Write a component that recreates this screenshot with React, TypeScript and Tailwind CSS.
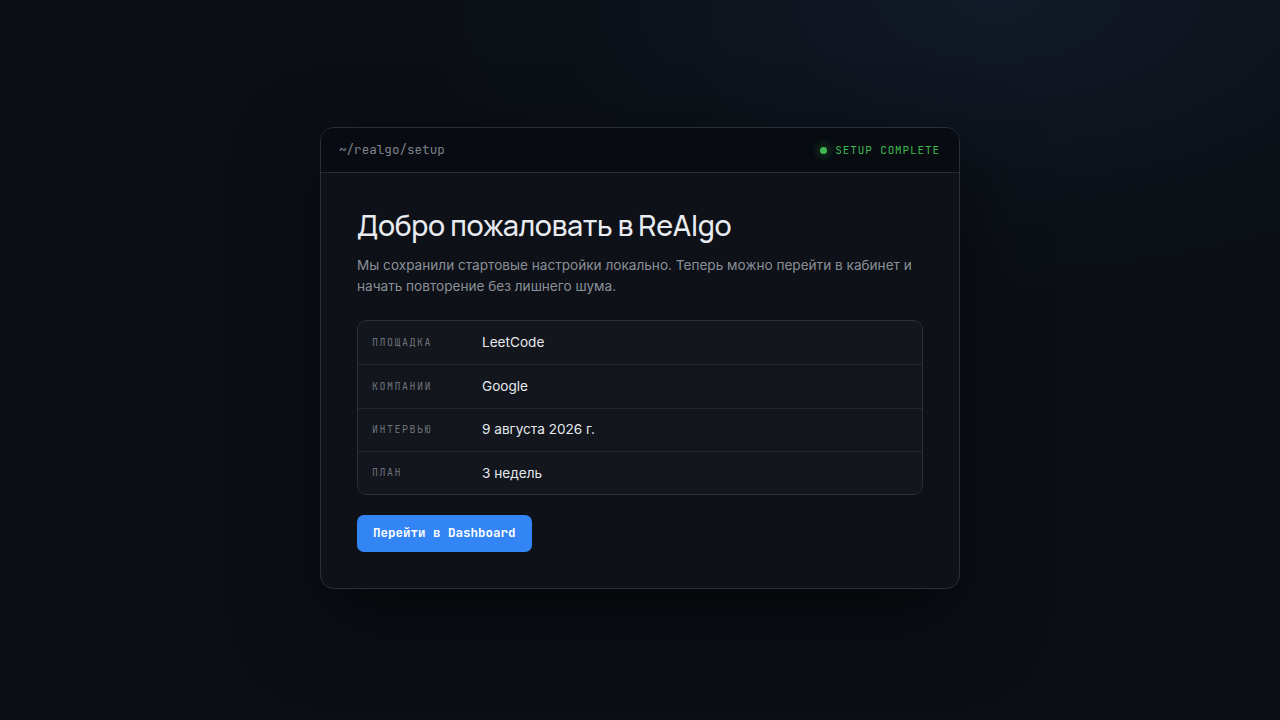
const rows = [
    { label: 'Площадка', value: 'LeetCode' },
    { label: 'Компании', value: 'Google' },
    { label: 'Интервью', value: '9 августа 2026 г.' },
    { label: 'План', value: '3 недель' }
]

const mono = "font-['JetBrains_Mono','DejaVu_Sans_Mono','Liberation_Mono',monospace]"

function App() {
    return (
        <div className="min-h-screen w-full bg-[#0b0f15] bg-[radial-gradient(ellipse_600px_300px_at_78%_0%,#111a28_0%,#0d121a_60%,#0b0f15_100%)] flex justify-center pt-[127px] font-['Inter','Noto_Sans',sans-serif]">
            <div className="w-[640px] h-fit rounded-[14px] border border-[#2a2f38] bg-[#0e1117] shadow-[0_30px_80px_rgba(0,0,0,0.55)] overflow-hidden">
                <div className="h-[45px] flex items-center justify-between pl-[18px] pr-[19px] bg-[#080b11] border-b border-[#262b33]">
                    <span className={`${mono} text-[12.6px] text-[#7d838d]`}>~/realgo/setup</span>
                    <div className="flex items-center gap-[8px]">
                        <span className="w-[7px] h-[7px] rounded-full bg-[#3fb950] shadow-[0_0_8px_3px_rgba(63,185,80,0.25)]"></span>
                        <span className={`${mono} text-[11px] tracking-[0.08em] text-[#3fb950]`}>SETUP COMPLETE</span>
                    </div>
                </div>
                <div className="px-[36px] pt-[35px] pb-[36px]">
                    <h1 className="text-[28.5px] leading-[36px] font-medium tracking-[-0.01em] text-[#e8ebf0] font-['Manrope','Inter',sans-serif]">
                        Добро пожаловать в ReAlgo
                    </h1>
                    <p className="mt-[11px] text-[13.6px] leading-[21px] text-[#8a9099] max-w-[566px]">
                        Мы сохранили стартовые настройки локально. Теперь можно перейти в кабинет и начать повторение без лишнего шума.
                    </p>
                    <div className="mt-[23px] rounded-[10px] border border-[#2a2f38] bg-[#13161d] overflow-hidden">
                        {rows.map((row, i) => (
                            <div
                                key={row.label}
                                className={`flex items-center h-[43.25px] px-[14px] ${i > 0 ? 'border-t border-[#22262e]' : ''}`}
                            >
                                <span className={`${mono} w-[110px] shrink-0 text-[10px] uppercase tracking-[0.15em] text-[#6c727c]`}>
                                    {row.label}
                                </span>
                                <span className="text-[13.6px] text-[#e6e9ee]">{row.value}</span>
                            </div>
                        ))}
                    </div>
                    <button className={`${mono} mt-[20px] h-[37px] px-[16px] rounded-[7px] bg-[#3385f6] text-[12.5px] font-bold text-white`}>
                        Перейти в Dashboard
                    </button>
                </div>
            </div>
        </div>
    )
}

export default App
